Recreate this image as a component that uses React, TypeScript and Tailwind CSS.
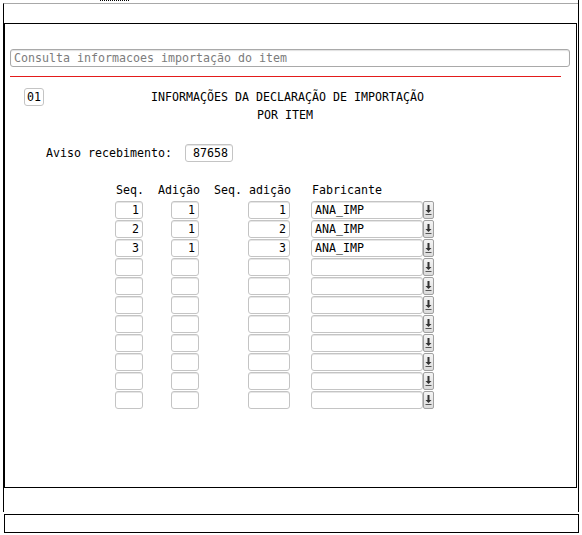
import React from "react";

const font = { fontFamily: '"DejaVu Sans Mono", "Liberation Mono", monospace' };

const rows = [
  { seq: "1", adicao: "1", seqAdicao: "1", fab: "ANA_IMP" },
  { seq: "2", adicao: "1", seqAdicao: "2", fab: "ANA_IMP" },
  { seq: "3", adicao: "1", seqAdicao: "3", fab: "ANA_IMP" },
  ...Array.from({ length: 8 }, () => ({ seq: "", adicao: "", seqAdicao: "", fab: "" })),
];

const Field: React.FC<{ value: string; className: string; left?: boolean }> = ({ value, className, left }) => (
  <div
    className={`h-[18px] border border-[#c4c4c4] rounded-[3px] bg-white leading-[16px] text-black shadow-[inset_0_1px_0_#e6e6e6] ${
      left ? "pl-[3px] text-left" : "pr-[3px] text-right"
    } ${className}`}
  >
    {value}
  </div>
);

const DropButton = () => (
  <div className="w-[11px] h-[18px] border border-[#a0a0a0] rounded-[2px] bg-gradient-to-b from-[#f4f4f4] to-[#dcdcdc] flex items-center justify-center">
    <svg width="9" height="16" viewBox="0 0 9 16">
      <rect x="3.5" y="3" width="2" height="5" fill="#333" />
      <path d="M1.5 8 L7.5 8 L4.5 11 Z" fill="#333" />
      <rect x="1.5" y="12" width="6" height="1" fill="#555" />
    </svg>
  </div>
);

export default function App() {
  return (
    <div className="w-[582px] h-[535px] bg-white text-[11.63px] text-black overflow-hidden" style={font}>
      <div className="ml-[3px] w-[576px] h-[512px] border-r border-black flex flex-col">
        <div className="h-[3px]">
          <div className="ml-[97px] w-[29px] border-t border-dotted border-black" />
        </div>
        <div className="flex-1 border-t border-l border-t-[#a8a8a8] border-l-black">
          <div className="h-[19px]" />
          <div className="w-[573px] h-[465px] border border-black">
            <div className="ml-[5px] mt-[25px] w-[560px] h-[18px] border border-[#a9a9a9] rounded-[3px] pl-[3px] leading-[16px] text-[#7c7c7c] shadow-[inset_0_1px_1px_#e0e0e0]">
              Consulta informacoes importação do item
            </div>
            <div className="ml-[5px] mt-[9px] w-[551px] h-px bg-[#e31b1b]" />

            <div className="mt-[11px] flex">
              <div className="ml-[19px] w-[20px] h-[18px] border border-[#c4c4c4] rounded-[3px] pl-[2px] leading-[16px]">
                01
              </div>
              <div className="ml-[107px] leading-[18px]">
                <div>INFORMAÇÕES DA DECLARAÇÃO DE IMPORTAÇÃO</div>
                <div className="pl-[106px]">POR ITEM</div>
              </div>
            </div>

            <div className="mt-[20px] flex items-center">
              <div className="ml-[41px] w-[139px] leading-[18px]">Aviso recebimento:</div>
              <Field value="87658" className="w-[48px] pr-[4px]" />
            </div>

            <div className="mt-[19px] flex leading-[18px] whitespace-pre">
              <span className="ml-[111px]">Seq.</span>
              <span className="ml-[14px]">Adição</span>
              <span className="ml-[14px]">Seq. adição</span>
              <span className="ml-[21px]">Fabricante</span>
            </div>

            <div className="mt-[2px] flex flex-col gap-px">
              {rows.map((r, i) => (
                <div key={i} className="flex h-[18px]">
                  <Field value={r.seq} className="ml-[110px] w-[28px]" />
                  <Field value={r.adicao} className="ml-[28px] w-[28px]" />
                  <Field value={r.seqAdicao} className="ml-[49px] w-[42px]" />
                  <Field value={r.fab} left className="ml-[21px] w-[112px]" />
                  <DropButton />
                </div>
              ))}
            </div>
          </div>
        </div>
      </div>
      <div className="mt-[2px] ml-[4px] w-[575px] h-[19px] border border-black" />
    </div>
  );
}
